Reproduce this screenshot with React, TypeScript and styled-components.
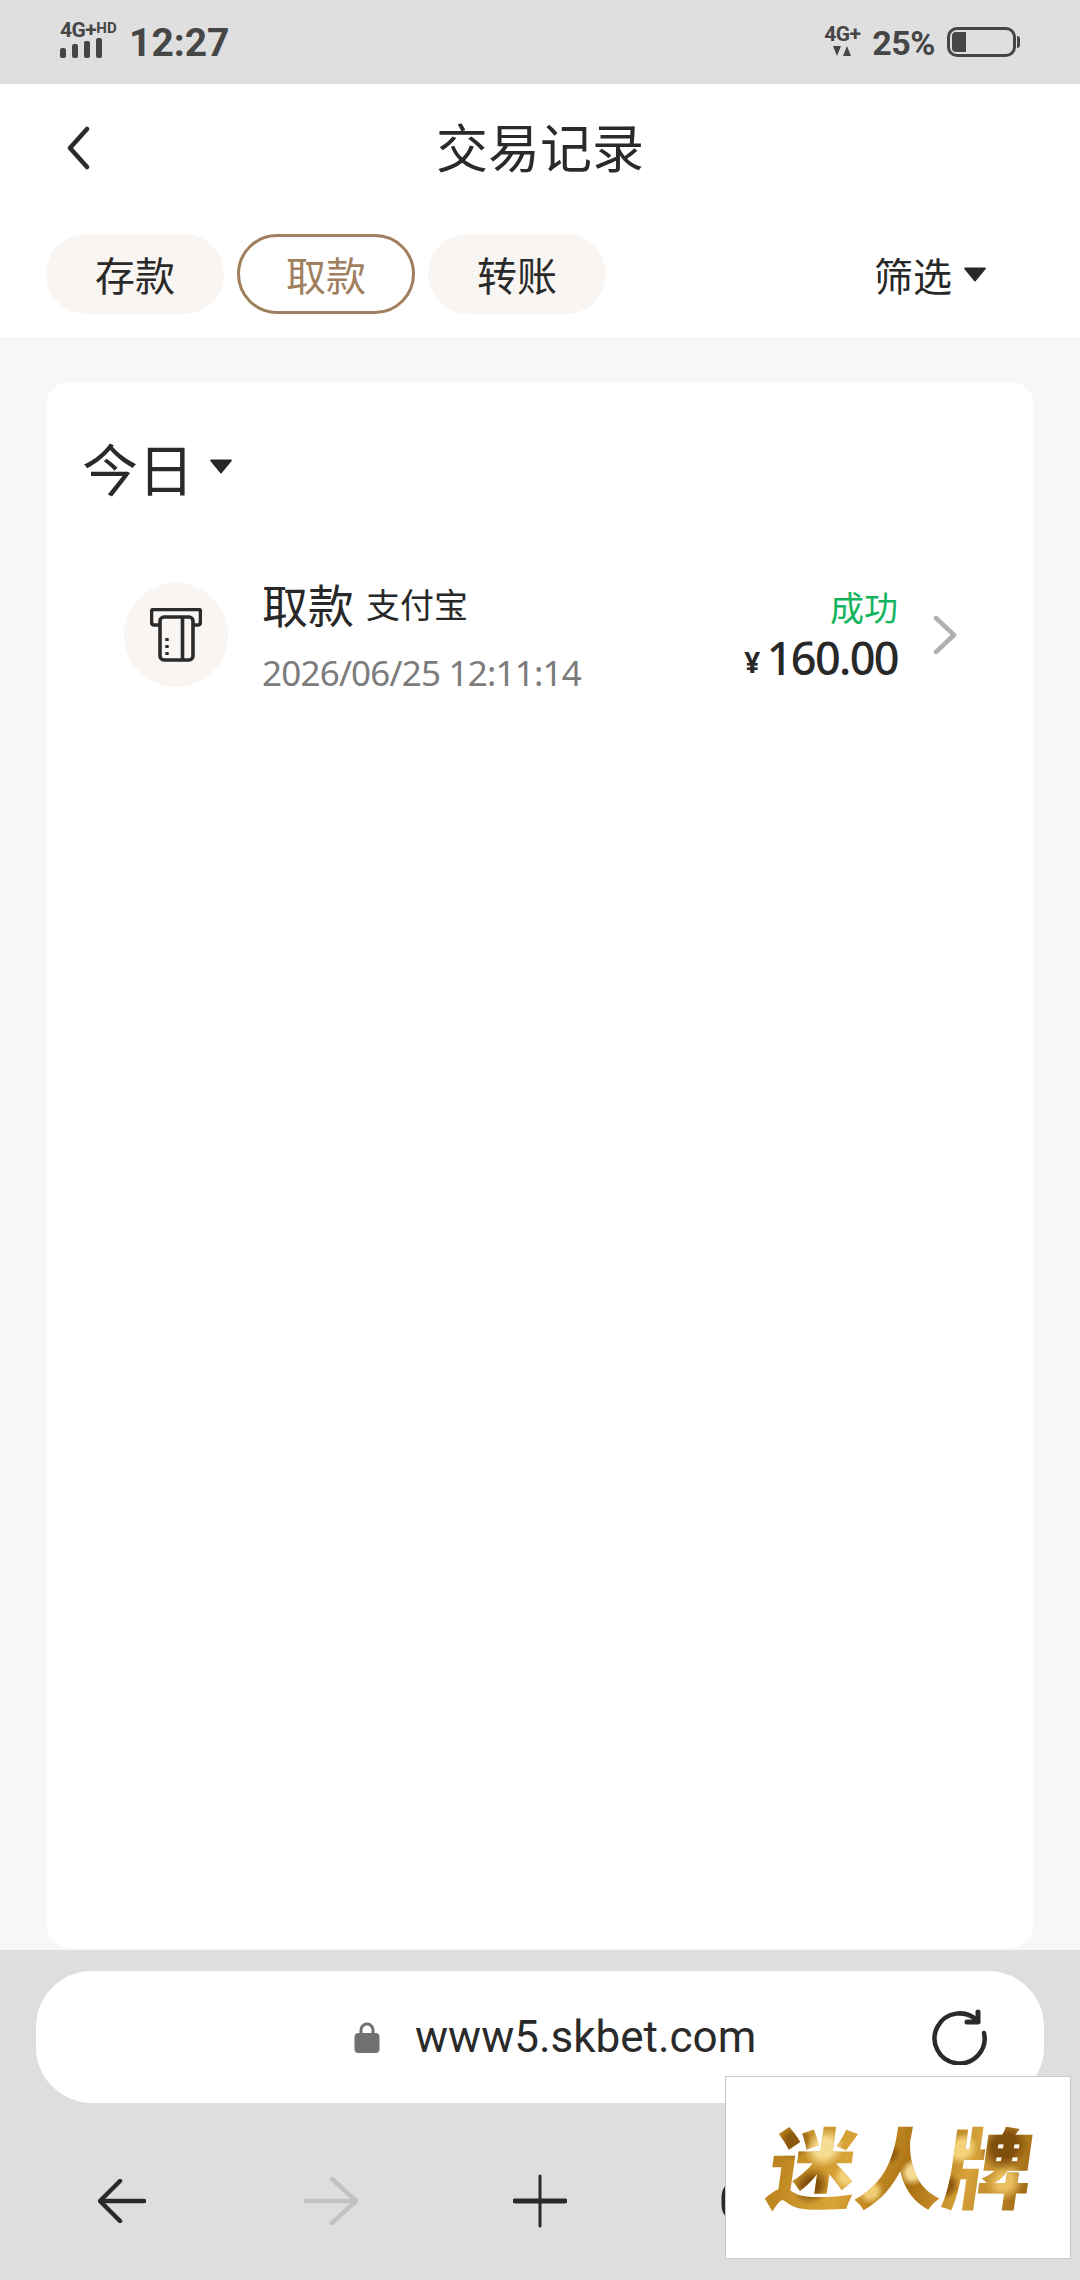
import React from 'react';
import styled, { createGlobalStyle } from 'styled-components';

const cjk = `"Noto Sans", "Noto Sans CJK SC", sans-serif`;

const GlobalStyle = createGlobalStyle`
  html, body {
    margin: 0;
    padding: 0;
    background: #dfdfdf;
  }
  * {
    box-sizing: border-box;
  }
`;

const Page = styled.div`
  position: relative;
  width: 1080px;
  height: 2280px;
  overflow: hidden;
  display: flex;
  flex-direction: column;
  font-family: ${cjk};
  color: #282828;
`;

const StatusBar = styled.div`
  height: 84px;
  flex: none;
  background: #dfdfdf;
  padding: 0 60px 0 60px;
  display: flex;
  align-items: flex-start;
  justify-content: space-between;
  color: #464646;
  font-family: Roboto, sans-serif;
`;

const StatusGroup = styled.div`
  display: flex;
  align-items: flex-start;
`;

const NetworkStack = styled.div`
  width: 58px;
  padding-top: 19px;
  display: flex;
  flex-direction: column;
  gap: 0;
`;

const NetworkLabel = styled.div`
  font-size: 21px;
  line-height: 19px;
  height: 19px;
  font-weight: 700;
  letter-spacing: -0.5px;
  white-space: nowrap;
`;

const NetworkSub = styled.span`
  font-size: 15px;
  vertical-align: 4px;
  letter-spacing: 0;
`;

const SignalBars = styled.div`
  display: flex;
  align-items: flex-end;
  gap: 6px;
  height: 20px;
`;

const SignalBar = styled.span<{ $h: number }>`
  width: 6px;
  height: ${p => p.$h}px;
  border-radius: 2px;
  background: #464646;
`;

const Time = styled.div`
  margin-left: 11px;
  padding-top: 20px;
  font-size: 39px;
  line-height: 46px;
  font-weight: 700;
`;

const DataStack = styled.div`
  width: 36px;
  padding-top: 24px;
  display: flex;
  flex-direction: column;
  align-items: center;
  gap: 2px;
`;

const DataLabel = styled.div`
  font-size: 21px;
  line-height: 20px;
  font-weight: 700;
  letter-spacing: -0.5px;
  white-space: nowrap;
`;

const Percent = styled.div`
  margin-left: 12px;
  padding-top: 23px;
  font-size: 34px;
  line-height: 40px;
  font-weight: 700;
  letter-spacing: -0.5px;
`;

const Battery = styled.div`
  margin-left: 12px;
  margin-top: 27px;
  display: flex;
  align-items: center;
  gap: 1px;
`;

const BatteryBody = styled.div`
  width: 69px;
  height: 30px;
  border: 3px solid #464646;
  border-radius: 10px;
  padding: 2px;
`;

const BatteryFill = styled.div<{ $pct: number }>`
  width: ${p => p.$pct}%;
  height: 100%;
  background: #464646;
  border-radius: 4px 0 0 4px;
`;

const BatteryNub = styled.div`
  width: 3px;
  height: 12px;
  background: #464646;
  border-radius: 0 3px 3px 0;
`;

const TopPanel = styled.div`
  flex: none;
  height: 253px;
  background: #fff;
  display: flex;
  flex-direction: column;
`;

const NavBar = styled.div`
  height: 150px;
  padding: 32px 0 0 65px;
  display: grid;
  grid-template-columns: 1fr auto 1fr;
  align-items: start;
  margin-right: 65px;
`;

const BackButton = styled.div`
  height: 64px;
  display: flex;
  align-items: center;
`;

const Title = styled.div`
  font-size: 52px;
  line-height: 64px;
  text-align: center;
  color: #2a2a2a;
`;

const TabRow = styled.div`
  padding: 0 46px;
  display: flex;
  align-items: center;
  gap: 13px;
`;

const Tab = styled.div<{ $active?: boolean }>`
  width: 178px;
  height: 80px;
  border-radius: 40px;
  display: flex;
  align-items: center;
  justify-content: center;
  font-size: 40px;
  background: ${p => (p.$active ? '#fff' : '#f9f5f2')};
  color: ${p => (p.$active ? '#a07f5e' : '#2a2a2a')};
  border: ${p => (p.$active ? '3px solid #a07f5e' : 'none')};
`;

const Filter = styled.div`
  margin-left: auto;
  margin-right: 48px;
  display: flex;
  align-items: center;
  gap: 12px;
  font-size: 39px;
`;

const Main = styled.div`
  flex: 1;
  min-height: 0;
  background: #f7f7f7;
  padding: 45px 46px 2px;
  display: flex;
`;

const Card = styled.div`
  flex: 1;
  background: #fff;
  border-radius: 24px;
  padding: 45px 0 0 36px;
`;

const DayHeader = styled.div`
  display: flex;
  align-items: center;
  gap: 16px;
  height: 78px;
  font-size: 56px;
  color: #2a2a2a;
`;

const RecordRow = styled.div`
  margin-top: 78px;
  padding-left: 42px;
  display: flex;
  align-items: flex-start;
`;

const IconCircle = styled.div`
  width: 104px;
  height: 104px;
  flex: none;
  border-radius: 50%;
  background: #f9f5f2;
  display: flex;
  align-items: center;
  justify-content: center;
`;

const RecordInfo = styled.div`
  margin-left: 34px;
  margin-top: -3px;
  width: 482px;
  display: flex;
  flex-direction: column;
  gap: 21px;
`;

const RecordTitle = styled.div`
  display: flex;
  align-items: center;
  gap: 12px;
  height: 50px;
  line-height: 50px;
  font-size: 46px;
`;

const RecordMethod = styled.span`
  font-size: 34px;
`;

const RecordDate = styled.div`
  font-size: 35px;
  line-height: 44px;
  letter-spacing: -0.8px;
  color: #7c7c7c;
  white-space: nowrap;
`;

const RecordAmounts = styled.div`
  width: 154px;
  display: flex;
  flex-direction: column;
  align-items: flex-end;
  gap: 1px;
  padding-top: 2px;
`;

const RecordStatus = styled.div`
  font-size: 34px;
  line-height: 46px;
  color: #12b45d;
`;

const Amount = styled.div`
  font-size: 45px;
  line-height: 52px;
  font-weight: 500;
  letter-spacing: -1.6px;
  white-space: nowrap;
`;

const Currency = styled.span`
  font-size: 28px;
  font-weight: 700;
  margin-right: 8px;
  vertical-align: 2px;
`;

const RowChevron = styled.div`
  margin-left: 35px;
  padding-top: 33px;
  display: flex;
`;

const BrowserBar = styled.div`
  flex: none;
  height: 330px;
  background: #dedede;
  padding: 21px 36px 0;
  display: flex;
  flex-direction: column;
`;

const UrlPill = styled.div`
  position: relative;
  height: 132px;
  border-radius: 56px;
  background: #fff;
  display: flex;
  align-items: center;
  padding-left: 318px;
`;

const UrlText = styled.div`
  margin-left: 35px;
  font-family: Roboto, sans-serif;
  font-size: 44px;
  color: #2a2a2a;
`;

const ReloadSlot = styled.div`
  margin-left: auto;
  margin-right: 56px;
  display: flex;
`;

const ToolRow = styled.div`
  flex: 1;
  margin: 0 -19px;
  display: grid;
  grid-template-columns: repeat(5, 209px);
  align-items: center;
  justify-items: center;
  padding-top: 18px;
`;

const AdBox = styled.div`
  position: absolute;
  left: 725px;
  top: 2076px;
  width: 346px;
  height: 183px;
  background: #fff;
  border: 1px solid #c9c9c9;
  display: flex;
  align-items: center;
  justify-content: center;
`;

const AdText = styled.div`
  font-family: "Noto Sans CJK SC", sans-serif;
  font-size: 88px;
  line-height: 100px;
  font-weight: 900;
  white-space: nowrap;
  transform: skewX(-8deg) translate(3px, -4px);
  background:
    radial-gradient(circle at 8% 28%, #8a590f 0 3%, transparent 7%),
    radial-gradient(circle at 20% 34%, #f6dc92 0 4%, transparent 9%),
    radial-gradient(circle at 30% 62%, #f3d27a 0 3%, transparent 7%),
    radial-gradient(circle at 17% 72%, #7f4f0c 0 3%, transparent 8%),
    radial-gradient(circle at 45% 40%, #8f5d10 0 3%, transparent 7%),
    radial-gradient(circle at 55% 58%, #f6dc92 0 4%, transparent 9%),
    radial-gradient(circle at 40% 78%, #f0cd74 0 3%, transparent 7%),
    radial-gradient(circle at 72% 35%, #f3d27a 0 4%, transparent 8%),
    radial-gradient(circle at 68% 72%, #8a590f 0 3%, transparent 7%),
    radial-gradient(circle at 88% 32%, #7f4f0c 0 5%, transparent 10%),
    radial-gradient(circle at 90% 68%, #e9bf5e 0 3%, transparent 8%),
    linear-gradient(100deg, #b57d19, #d9a437 30%, #a96f12 55%, #d7a23a 75%, #9a6410);
  -webkit-background-clip: text;
  background-clip: text;
  color: transparent;
`;

const Triangle = ({ size = 22 }: { size?: number }) => (
  <svg width={size} height={size * 0.72} viewBox="0 0 22 16">
    <path d="M1 1.5h20a1 1 0 0 1 .8 1.6L11.8 15.2a1 1 0 0 1-1.6 0L.2 3.1A1 1 0 0 1 1 1.5z" fill="#282828" />
  </svg>
);

const CardSlotIcon = () => (
  <svg width="52" height="54" viewBox="0 0 52 54" fill="none" stroke="#2b2b2b" strokeWidth="3.6" strokeLinejoin="round">
    <path d="M9 17H4a2.5 2.5 0 0 1-2.5-2.5V3.5A2 2 0 0 1 3.5 1.5h45a2 2 0 0 1 2 2v11A2.5 2.5 0 0 1 48 17h-5" />
    <rect x="10" y="9" width="33" height="43" rx="4" fill="#f9f5f2" />
    <path d="M32.5 9v43" />
    <path d="M17 30v3M17 37v3M17 44v3" strokeWidth="3.4" />
  </svg>
);

export default function App() {
  return (
    <Page>
      <GlobalStyle />
      <StatusBar>
        <StatusGroup>
          <NetworkStack>
            <NetworkLabel>
              4G+<NetworkSub>HD</NetworkSub>
            </NetworkLabel>
            <SignalBars>
              <SignalBar $h={10} />
              <SignalBar $h={14} />
              <SignalBar $h={17} />
              <SignalBar $h={20} />
            </SignalBars>
          </NetworkStack>
          <Time>12:27</Time>
        </StatusGroup>
        <StatusGroup>
          <DataStack>
            <DataLabel>4G+</DataLabel>
            <svg width="18" height="10" viewBox="0 0 18 10">
              <path d="M0 0h8l-4 10zM14 0l4 10h-8z" fill="#464646" />
            </svg>
          </DataStack>
          <Percent>25%</Percent>
          <Battery>
            <BatteryBody>
              <BatteryFill $pct={24} />
            </BatteryBody>
            <BatteryNub />
          </Battery>
        </StatusGroup>
      </StatusBar>

      <TopPanel>
        <NavBar>
          <BackButton>
            <svg width="26" height="44" viewBox="0 0 26 44" fill="none">
              <path d="M22 3 5 22l17 19" stroke="#2a2a2a" strokeWidth="4.5" strokeLinecap="round" strokeLinejoin="round" />
            </svg>
          </BackButton>
          <Title>交易记录</Title>
        </NavBar>
        <TabRow>
          <Tab>存款</Tab>
          <Tab $active>取款</Tab>
          <Tab>转账</Tab>
          <Filter>
            筛选
            <Triangle />
          </Filter>
        </TabRow>
      </TopPanel>

      <Main>
        <Card>
          <DayHeader>
            今日
            <Triangle />
          </DayHeader>
          <RecordRow>
            <IconCircle>
              <CardSlotIcon />
            </IconCircle>
            <RecordInfo>
              <RecordTitle>
                取款
                <RecordMethod>支付宝</RecordMethod>
              </RecordTitle>
              <RecordDate>2026/06/25 12:11:14</RecordDate>
            </RecordInfo>
            <RecordAmounts>
              <RecordStatus>成功</RecordStatus>
              <Amount>
                <Currency>¥</Currency>160.00
              </Amount>
            </RecordAmounts>
            <RowChevron>
              <svg width="24" height="38" viewBox="0 0 24 38" fill="none">
                <path d="M3 2l18 17L3 36" stroke="#b0b0b0" strokeWidth="4.5" strokeLinecap="round" strokeLinejoin="round" />
              </svg>
            </RowChevron>
          </RecordRow>
        </Card>
      </Main>

      <BrowserBar>
        <UrlPill>
          <svg width="26" height="31" viewBox="0 0 26 31">
            <path d="M7 13V8a6 6 0 0 1 12 0v5" fill="none" stroke="#707070" strokeWidth="3" />
            <rect x="0.5" y="11" width="25" height="20" rx="4" fill="#707070" />
          </svg>
          <UrlText>www5.skbet.com</UrlText>
          <ReloadSlot>
            <svg width="56" height="56" viewBox="0 0 56 56" fill="none" stroke="#2a2a2a" strokeLinecap="round" strokeLinejoin="round">
              <path d="M46 12.5A25 25 0 1 0 52 24" strokeWidth="4.5" />
              <path d="M46 3v10H35" strokeWidth="5" />
            </svg>
          </ReloadSlot>
        </UrlPill>
        <ToolRow>
          <svg width="48" height="44" viewBox="0 0 48 44" fill="none" stroke="#2a2a2a" strokeLinecap="round" strokeLinejoin="round" strokeWidth="4.5">
            <path d="M22 2 2 22l20 20" />
            <path d="M3 22h43" />
          </svg>
          <svg width="54" height="48" viewBox="0 0 54 48" fill="none" stroke="#c2c2c2" strokeLinecap="round" strokeLinejoin="round" strokeWidth="4.5">
            <path d="M28 2l24 22-24 22" />
            <path d="M2 24h48" />
          </svg>
          <svg width="54" height="54" viewBox="0 0 54 54" fill="none" stroke="#2a2a2a" strokeLinecap="round">
            <path d="M27 2v50" strokeWidth="3" />
            <path d="M2 27h50" strokeWidth="5" />
          </svg>
          <svg width="56" height="46" viewBox="0 0 56 46" fill="none" stroke="#2a2a2a" strokeWidth="5">
            <rect x="3" y="3" width="50" height="40" rx="16" />
          </svg>
          <span />
        </ToolRow>
      </BrowserBar>

      <AdBox>
        <AdText>迷人牌</AdText>
      </AdBox>
    </Page>
  );
}
